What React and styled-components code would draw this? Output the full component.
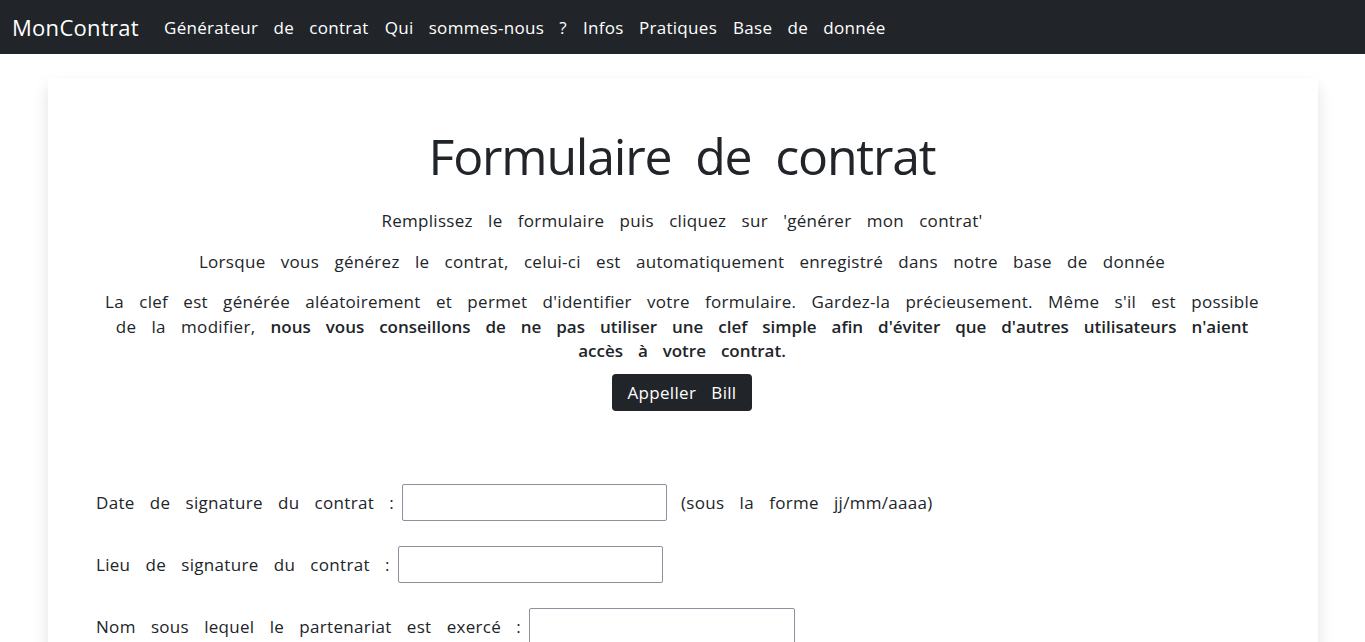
import styled, { createGlobalStyle } from 'styled-components';

const GlobalStyle = createGlobalStyle`
  html, body {
    margin: 0;
    padding: 0;
    background: #ffffff;
  }
  body {
    font-family: "Open Sans", "Liberation Sans", sans-serif;
    color: #212529;
    letter-spacing: 0.3px;
    word-spacing: 10.5px;
  }
  * {
    box-sizing: border-box;
  }
`;

const fields = [
  { label: 'Date de signature du contrat :', width: 265, hint: '(sous la forme jj/mm/aaaa)' },
  { label: 'Lieu de signature du contrat :', width: 265 },
  { label: 'Nom sous lequel le partenariat est exercé :', width: 266 },
  { label: 'Adresse du siège :', width: 266 },
];

export default function App() {
  return (
    <>
      <GlobalStyle />
      <Navbar>
        <Brand>MonContrat</Brand>
        <NavLinks>
          <NavLink>Générateur de contrat</NavLink>
          <NavLink>Qui sommes-nous ?</NavLink>
          <NavLink>Infos Pratiques</NavLink>
          <NavLink>Base de donnée</NavLink>
        </NavLinks>
      </Navbar>
      <Page>
        <Card>
          <Title>Formulaire de contrat</Title>
          <Intro>Remplissez le formulaire puis cliquez sur 'générer mon contrat'</Intro>
          <Intro>
            Lorsque vous générez le contrat, celui-ci est automatiquement enregistré dans notre base de donnée
          </Intro>
          <Intro $last>
            La clef est générée aléatoirement et permet d'identifier votre formulaire. Gardez-la
            précieusement. Même s'il est possible de la modifier,{' '}
            <strong>
              nous vous conseillons de ne pas utiliser une clef simple afin d'éviter que d'autres
              utilisateurs n'aient accès à votre contrat.
            </strong>
          </Intro>
          <ButtonRow>
            <DarkButton type="button">Appeller Bill</DarkButton>
          </ButtonRow>
          <Form>
            {fields.map(field => (
              <FieldRow key={field.label}>
                <Label>{field.label}</Label>
                <Input type="text" $width={field.width} />
                {field.hint && <Hint>{field.hint}</Hint>}
              </FieldRow>
            ))}
          </Form>
        </Card>
      </Page>
    </>
  );
}

const Navbar = styled.nav`
  height: 54px;
  background: #212529;
  display: flex;
  align-items: center;
  padding: 0 12px;
  color: #ffffff;
`;

const Brand = styled.a`
  font-size: 22px;
  font-weight: 500;
  margin-right: 25px;
  word-spacing: 0;
`;

const NavLinks = styled.div`
  display: flex;
  gap: 16px;
`;

const NavLink = styled.a`
  font-size: 17px;
  font-weight: 500;
  color: #ffffff;
  cursor: pointer;
`;

const Page = styled.main`
  padding: 24px 0 60px 48px;
`;

const Card = styled.section`
  width: 1270px;
  background: #ffffff;
  border-radius: 4px;
  box-shadow: 0 0.5rem 1rem rgba(0, 0, 0, 0.12);
  padding: 48px 50px 60px 48px;
`;

const Title = styled.h1`
  margin: 0 0 23px;
  text-align: center;
  font-size: 50px;
  font-weight: 400;
  line-height: 1.2;
  letter-spacing: -1.2px;
  word-spacing: 12px;
`;

const Intro = styled.p`
  margin: 0 0 ${props => (props.$last ? '10px' : '16px')};
  text-align: center;
  font-size: 17px;
  line-height: 24.5px;

  strong {
    font-weight: 600;
    letter-spacing: 0;
  }
`;

const ButtonRow = styled.div`
  display: flex;
  justify-content: center;
`;

const DarkButton = styled.button`
  background: #212529;
  color: #ffffff;
  border: none;
  border-radius: 4px;
  height: 37px;
  padding: 0 16px;
  font-family: inherit;
  font-size: 17px;
  font-weight: 500;
  letter-spacing: 0.3px;
  word-spacing: 10.5px;
`;

const Form = styled.form`
  margin-top: 73px;
  display: flex;
  flex-direction: column;
  gap: 25px;
`;

const FieldRow = styled.div`
  display: flex;
  align-items: center;
  gap: 8px;
  font-size: 17px;
`;

const Label = styled.label``;

const Input = styled.input`
  width: ${props => props.$width}px;
  height: 37px;
  border: 1px solid #8f8f9d;
  border-radius: 2px;
  background: #ffffff;
`;

const Hint = styled.span`
  margin-left: 6px;
`;
